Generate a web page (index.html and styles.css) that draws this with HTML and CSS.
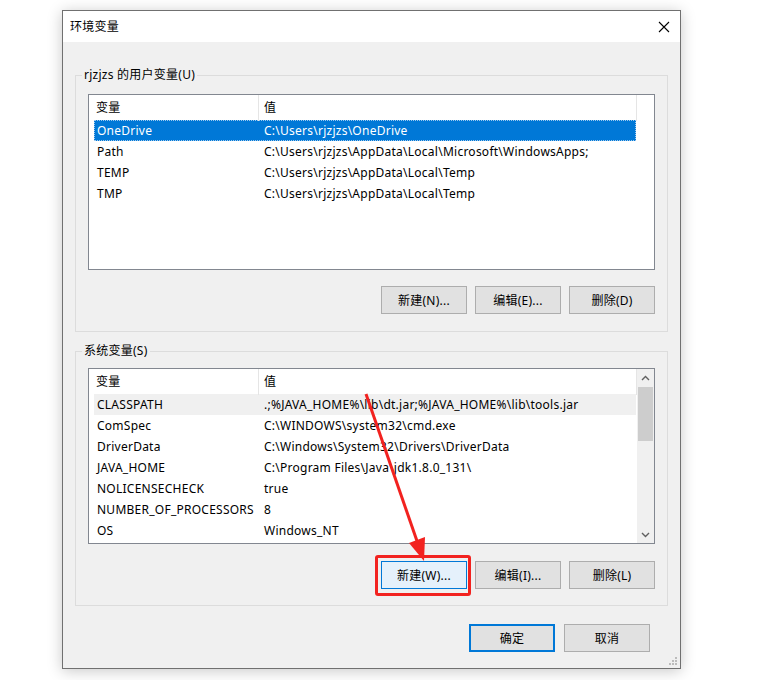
FILE: index.html
```html
<!DOCTYPE html>
<html lang="zh-CN">
<head>
<meta charset="utf-8">
<title>环境变量</title>
<link rel="stylesheet" href="styles.css">
</head>
<body>
<div class="stage">
  <div class="window">
    <div class="titlebar">
      <span class="title">环境变量</span>
      <span class="close">
        <svg width="12" height="12" viewBox="0 0 12 12"><path d="M1 1 L11 11 M11 1 L1 11" stroke="#000" stroke-width="1.1" fill="none"/></svg>
      </span>
    </div>
    <div class="body">
      <fieldset class="group group-user">
        <legend>rjzjzs 的用户变量(U)</legend>
        <div class="list">
          <div class="table">
            <div class="head"><div class="hc hc1">变量</div><div class="hc hc2">值</div></div>
            <div class="row sel"><span class="c1">OneDrive</span><span class="c2">C:\Users\rjzjzs\OneDrive</span></div>
            <div class="row"><span class="c1">Path</span><span class="c2">C:\Users\rjzjzs\AppData\Local\Microsoft\WindowsApps;</span></div>
            <div class="row"><span class="c1">TEMP</span><span class="c2">C:\Users\rjzjzs\AppData\Local\Temp</span></div>
            <div class="row"><span class="c1">TMP</span><span class="c2">C:\Users\rjzjzs\AppData\Local\Temp</span></div>
          </div>
        </div>
        <div class="btns">
          <button class="btn">新建(N)...</button>
          <button class="btn">编辑(E)...</button>
          <button class="btn">删除(D)</button>
        </div>
      </fieldset>

      <fieldset class="group group-sys">
        <legend>系统变量(S)</legend>
        <div class="list">
          <div class="table">
            <div class="head"><div class="hc hc1">变量</div><div class="hc hc2">值</div></div>
            <div class="row hover"><span class="c1">CLASSPATH</span><span class="c2">.;%JAVA_HOME%\lib\dt.jar;%JAVA_HOME%\lib\tools.jar</span></div>
            <div class="row"><span class="c1">ComSpec</span><span class="c2">C:\WINDOWS\system32\cmd.exe</span></div>
            <div class="row"><span class="c1">DriverData</span><span class="c2">C:\Windows\System32\Drivers\DriverData</span></div>
            <div class="row"><span class="c1">JAVA_HOME</span><span class="c2">C:\Program Files\Java\jdk1.8.0_131\</span></div>
            <div class="row"><span class="c1">NOLICENSECHECK</span><span class="c2">true</span></div>
            <div class="row"><span class="c1">NUMBER_OF_PROCESSORS</span><span class="c2">8</span></div>
            <div class="row"><span class="c1">OS</span><span class="c2">Windows_NT</span></div>
          </div>
          <div class="scrollbar">
            <div class="sb-arrow">
              <svg width="9" height="6" viewBox="0 0 9 6"><path d="M1 5 L4.5 1.5 L8 5" stroke="#606060" stroke-width="1.4" fill="none"/></svg>
            </div>
            <div class="sb-track"><div class="sb-thumb"></div></div>
            <div class="sb-arrow">
              <svg width="9" height="6" viewBox="0 0 9 6"><path d="M1 1 L4.5 4.5 L8 1" stroke="#606060" stroke-width="1.4" fill="none"/></svg>
            </div>
          </div>
        </div>
        <div class="btns">
          <span class="marked">
            <button class="btn focus">新建(W)...</button>
            <span class="mark"></span>
          </span>
          <button class="btn">编辑(I)...</button>
          <button class="btn">删除(L)</button>
        </div>
      </fieldset>

      <div class="dlg-btns">
        <button class="btn default">确定</button>
        <button class="btn">取消</button>
      </div>
    </div>
    <svg class="grip" width="10" height="10" viewBox="0 0 10 10">
      <rect x="7" y="1" width="2" height="2" fill="#bcbcbc"/>
      <rect x="4" y="4" width="2" height="2" fill="#bcbcbc"/>
      <rect x="7" y="4" width="2" height="2" fill="#bcbcbc"/>
      <rect x="1" y="7" width="2" height="2" fill="#bcbcbc"/>
      <rect x="4" y="7" width="2" height="2" fill="#bcbcbc"/>
      <rect x="7" y="7" width="2" height="2" fill="#bcbcbc"/>
    </svg>
  </div>
  <svg class="arrow" width="758" height="680" viewBox="0 0 758 680">
    <line x1="366" y1="394" x2="417" y2="541" stroke="#f2221f" stroke-width="3"/>
    <polygon points="424,561 409,543 425,537" fill="#f2221f"/>
  </svg>
</div>
</body>
</html>
```
FILE: styles.css
```css
* { box-sizing: border-box; }
html, body { margin: 0; padding: 0; background: #fff; }
body {
  font-family: "Noto Sans", "Noto Sans CJK SC", sans-serif;
  font-size: 12px;
  letter-spacing: 0.25px;
  color: #000;
}
.stage {
  position: relative;
  width: 758px;
  height: 680px;
  padding: 10px 0 0 62px;
}
.window {
  position: relative;
  width: 619px;
  border: 1px solid #707070;
  background: #f0f0f0;
  box-shadow: 0 2px 14px rgba(0,0,0,0.22);
}
.titlebar {
  height: 31px;
  background: #fff;
  display: flex;
  align-items: center;
  justify-content: space-between;
  padding-left: 7px;
}
.title { font-size: 12px; line-height: 16px; }
.close {
  width: 32px;
  height: 31px;
  display: flex;
  align-items: center;
  justify-content: center;
}
.body {
  padding: 25px 12px 16px 12px;
}
.group {
  margin: 0;
  min-width: 0;
  border: 1px solid #dcdcdc;
  padding: 11px 12px 17px 12px;
}
.group legend {
  margin-left: -6px;
  padding: 0 2px;
  line-height: 16px;
  height: 16px;
}
.group-sys {
  margin-top: 11px;
  padding: 9px 12px 16px 12px;
}
.list {
  height: 176px;
  border: 1px solid #828790;
  background: #fff;
  display: flex;
}
.table {
  flex: 1;
  min-width: 0;
}
.head {
  display: grid;
  grid-template-columns: 169px 379px;
  height: 25px;
}
.hc {
  line-height: 26px;
  white-space: nowrap;
}
.hc1 { padding-left: 7px; }
.hc2 {
  border-left: 1px solid #e5e5e5;
  border-right: 1px solid #e5e5e5;
  padding-left: 5px;
}
.row {
  display: grid;
  grid-template-columns: 164px 378px;
  width: 542px;
  height: 21px;
  line-height: 22px;
  margin-left: 5px;
  white-space: nowrap;
}
.row .c1 { padding-left: 3px; overflow: hidden; }
.row .c2 { padding-left: 6px; overflow: hidden; }
.row.sel {
  background: #0078d7;
  color: #fff;
  outline: 1px dotted #9ec9ee;
  outline-offset: -1px;
}
.row.hover { background: #f0f0f0; }
.scrollbar {
  width: 17px;
  background: #f0f0f0;
  display: flex;
  flex-direction: column;
  margin-left: 1px;
}
.sb-arrow {
  height: 17px;
  display: flex;
  align-items: center;
  justify-content: center;
}
.sb-track {
  flex: 1;
  padding: 1px 1px 0 1px;
}
.sb-thumb {
  height: 54px;
  background: #cdcdcd;
}
.btns {
  display: flex;
  justify-content: flex-end;
  gap: 8px;
  margin-top: 16px;
}
.group-sys .btns { margin-top: 17px; }
.btn {
  width: 86px;
  height: 28px;
  border: 1px solid #adadad;
  background: #e1e1e1;
  font-family: inherit;
  font-size: 12px;
  letter-spacing: 0.25px;
  color: #000;
  padding: 0;
  margin: 0;
}
.btn.focus {
  background: #e5f1fb;
  border-color: #0078d7;
}
.btn.default {
  border: 2px solid #0078d7;
}
.marked {
  position: relative;
  display: flex;
}
.mark {
  position: absolute;
  left: -6px;
  top: -6px;
  width: 96px;
  height: 41px;
  border: 3px solid #f2221f;
  border-radius: 3px;
}
.dlg-btns {
  display: flex;
  justify-content: flex-end;
  gap: 9px;
  margin-top: 18px;
  padding-right: 18px;
}
.grip {
  position: absolute;
  right: 2px;
  bottom: 2px;
}
.arrow {
  position: absolute;
  left: 0;
  top: 0;
  pointer-events: none;
}
```
